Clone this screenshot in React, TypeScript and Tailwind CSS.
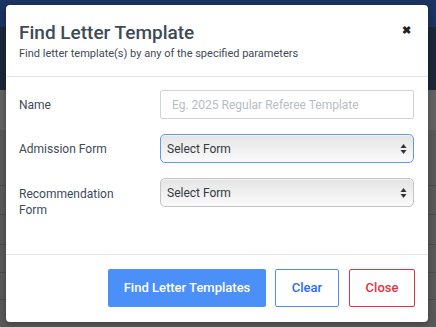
import React from "react";

function Arrows() {
  return (
    <svg width="7" height="12" viewBox="0 0 7 12" className="absolute right-[6px] top-1/2 -translate-y-1/2">
      <path d="M3.5 1 L6.5 5 L0.5 5 Z" fill="#333" />
      <path d="M3.5 11 L6.5 7 L0.5 7 Z" fill="#333" />
    </svg>
  );
}

function SelectBox({ focused }: { focused?: boolean }) {
  return (
    <div
      className={`relative h-[29px] w-[254px] rounded-[5px] border ${
        focused ? "border-[#5b9af5]" : "border-[#c4c4c4]"
      } bg-[linear-gradient(to_bottom,#e4e4e4_0%,#eeeeee_45%,#fbfbfb_100%)] shadow-[inset_0_1px_0_rgba(255,255,255,0.6)] flex items-center pl-[6px] text-[12px] text-[#333a40]`}
    >
      Select Form
      <Arrows />
    </div>
  );
}

export default function App() {
  return (
    <div className="relative w-[436px] h-[327px] overflow-hidden bg-[#595959] font-['Roboto',sans-serif]">
      <div className="h-[27px] bg-[#1c3461]" />
      <div className="h-[63px] bg-[#1b2739]" />
      <div className="h-[40px] bg-[#626262]" />
      <div className="h-[56px] border-b border-[#4c4c4c]" />
      <div className="h-[29px] border-b border-[#4c4c4c]" />
      <div className="h-[30px] border-b border-[#4c4c4c]" />
      <div className="h-[28px] border-b border-[#4c4c4c]" />
      <div className="h-[27px] border-b border-[#4c4c4c]" />
      <div className="flex justify-between px-[66px] text-[12px] text-[#222] leading-none">
        <span>Third Test Ocak Second Batch</span>
        <span>Third Test O</span>
      </div>

      <div className="absolute left-[6px] top-[5px] w-[422px] h-[317px] bg-white rounded-[4px] flex flex-col shadow-[0_2px_6px_rgba(0,0,0,0.3)]">
        <div className="h-[72px] border-b border-[#e3e6e9] px-[13px] pt-[16px] relative">
          <div className="text-[19px] leading-[24px] font-medium text-[#3d4b57]">Find Letter Template</div>
          <div className="text-[11px] leading-[14px] mt-[2px] text-[#3d4b57]">
            Find letter template(s) by any of the specified parameters
          </div>
          <span className="absolute right-[17px] top-[18px] text-[11px] font-bold text-[#222]">✖</span>
        </div>

        <div className="flex-1 px-[13px] pt-[13px] flex flex-col gap-[15px]">
          <div className="flex items-center">
            <div className="w-[141px] text-[12px] text-[#3d4b57]">Name</div>
            <div className="h-[29px] w-[254px] border border-[#cfd4d9] rounded-[2px] flex items-center pl-[11px] text-[12px] text-[#b8bdc2]">
              Eg. 2025 Regular Referee Template
            </div>
          </div>
          <div className="flex items-center">
            <div className="w-[141px] text-[12px] text-[#3d4b57]">Admission Form</div>
            <SelectBox focused />
          </div>
          <div className="flex items-start">
            <div className="w-[141px] text-[12px] leading-[16px] text-[#3d4b57] pt-[8px]">
              Recommendation
              <br />
              Form
            </div>
            <SelectBox />
          </div>
        </div>

        <div className="h-[68px] border-t border-[#e3e6e9] flex justify-end items-start pt-[14px] pr-[13px] gap-[9px]">
          <button className="h-[38px] w-[158px] rounded-[2px] bg-[#4b8ff8] text-white text-[13px] font-medium">
            Find Letter Templates
          </button>
          <button className="h-[38px] w-[64px] rounded-[2px] border border-[#4b8ff8] text-[#2b6ef0] text-[13px] font-medium">
            Clear
          </button>
          <button className="h-[38px] w-[66px] rounded-[2px] border border-[#e3343f] text-[#e3343f] text-[13px] font-medium ml-[1px]">
            Close
          </button>
        </div>
      </div>
    </div>
  );
}
